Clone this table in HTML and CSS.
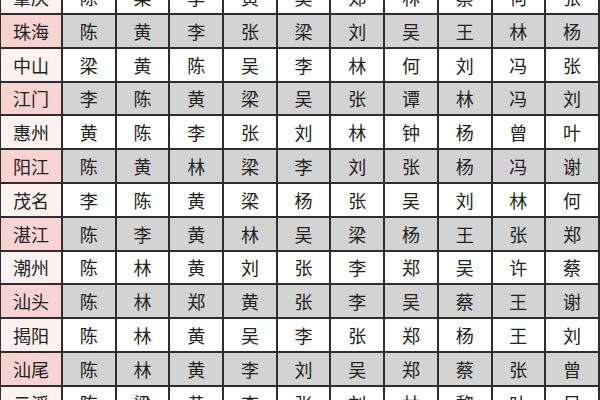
FILE: index.html
```html
<!DOCTYPE html>
<html lang="zh">
<head>
<meta charset="utf-8">
<link rel="stylesheet" href="styles.css">
</head>
<body>
<div class="grid">
  <div class="city pale">肇庆</div><div class="c">陈</div><div class="c">梁</div><div class="c">李</div><div class="c">黄</div><div class="c">吴</div><div class="c">郑</div><div class="c">林</div><div class="c">蔡</div><div class="c">何</div><div class="c">张</div>
  <div class="city pink">珠海</div><div class="c g">陈</div><div class="c g">黄</div><div class="c g">李</div><div class="c g">张</div><div class="c g">梁</div><div class="c g">刘</div><div class="c g">吴</div><div class="c g">王</div><div class="c g">林</div><div class="c g">杨</div>
  <div class="city pale">中山</div><div class="c">梁</div><div class="c">黄</div><div class="c">陈</div><div class="c">吴</div><div class="c">李</div><div class="c">林</div><div class="c">何</div><div class="c">刘</div><div class="c">冯</div><div class="c">张</div>
  <div class="city pink">江门</div><div class="c g">李</div><div class="c g">陈</div><div class="c g">黄</div><div class="c g">梁</div><div class="c g">吴</div><div class="c g">张</div><div class="c g">谭</div><div class="c g">林</div><div class="c g">冯</div><div class="c g">刘</div>
  <div class="city pale">惠州</div><div class="c">黄</div><div class="c">陈</div><div class="c">李</div><div class="c">张</div><div class="c">刘</div><div class="c">林</div><div class="c">钟</div><div class="c">杨</div><div class="c">曾</div><div class="c">叶</div>
  <div class="city pink">阳江</div><div class="c g">陈</div><div class="c g">黄</div><div class="c g">林</div><div class="c g">梁</div><div class="c g">李</div><div class="c g">刘</div><div class="c g">张</div><div class="c g">杨</div><div class="c g">冯</div><div class="c g">谢</div>
  <div class="city pale">茂名</div><div class="c">李</div><div class="c">陈</div><div class="c">黄</div><div class="c">梁</div><div class="c">杨</div><div class="c">张</div><div class="c">吴</div><div class="c">刘</div><div class="c">林</div><div class="c">何</div>
  <div class="city pink">湛江</div><div class="c g">陈</div><div class="c g">李</div><div class="c g">黄</div><div class="c g">林</div><div class="c g">吴</div><div class="c g">梁</div><div class="c g">杨</div><div class="c g">王</div><div class="c g">张</div><div class="c g">郑</div>
  <div class="city pale">潮州</div><div class="c">陈</div><div class="c">林</div><div class="c">黄</div><div class="c">刘</div><div class="c">张</div><div class="c">李</div><div class="c">郑</div><div class="c">吴</div><div class="c">许</div><div class="c">蔡</div>
  <div class="city pink">汕头</div><div class="c g">陈</div><div class="c g">林</div><div class="c g">郑</div><div class="c g">黄</div><div class="c g">张</div><div class="c g">李</div><div class="c g">吴</div><div class="c g">蔡</div><div class="c g">王</div><div class="c g">谢</div>
  <div class="city pale">揭阳</div><div class="c">陈</div><div class="c">林</div><div class="c">黄</div><div class="c">吴</div><div class="c">李</div><div class="c">张</div><div class="c">郑</div><div class="c">杨</div><div class="c">王</div><div class="c">刘</div>
  <div class="city pink">汕尾</div><div class="c g">陈</div><div class="c g">林</div><div class="c g">黄</div><div class="c g">李</div><div class="c g">刘</div><div class="c g">吴</div><div class="c g">郑</div><div class="c g">蔡</div><div class="c g">张</div><div class="c g">曾</div>
  <div class="city pale">云浮</div><div class="c">陈</div><div class="c">梁</div><div class="c">黄</div><div class="c">李</div><div class="c">张</div><div class="c">刘</div><div class="c">林</div><div class="c">黎</div><div class="c">叶</div><div class="c">吴</div>
</div>
</body>
</html>
```
FILE: styles.css
```css
html, body {
  margin: 0;
  padding: 0;
  background: #ffffff;
  overflow: hidden;
}
body {
  width: 600px;
  height: 400px;
  font-family: "Noto Sans CJK SC", "Noto Sans", sans-serif;
}
.grid {
  display: grid;
  grid-template-columns: 60px repeat(10, 51.7px);
  grid-auto-rows: 31.8px;
  gap: 2px;
  padding: 2px;
  background: #2e2e2e;
  width: max-content;
  margin-left: -1px;
  margin-top: -20.8px;
}
.grid > div {
  display: flex;
  align-items: center;
  justify-content: center;
  font-size: 18px;
  color: #222;
  background: #ffffff;
}
.grid > .g {
  background: #d3d3d3;
}
.grid > .pink {
  background: #f9d2d2;
}
.grid > .pale {
  background: #fdf1f1;
}
```
